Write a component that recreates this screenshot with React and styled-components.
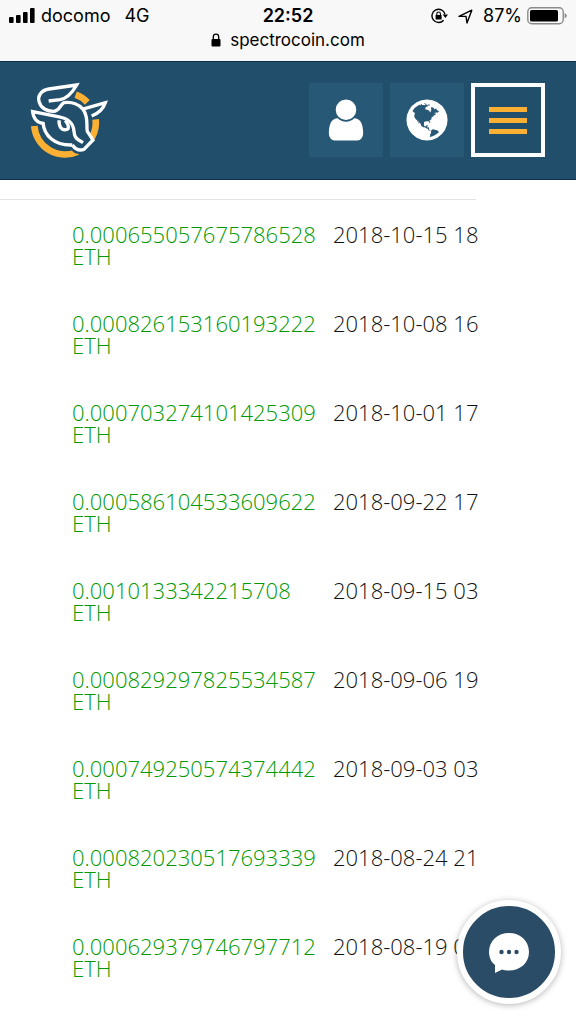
import React from "react";
import styled, { createGlobalStyle } from "styled-components";

const transactions = [
  { amount: "0.000655057675786528", date: "2018-10-15 18" },
  { amount: "0.000826153160193222", date: "2018-10-08 16" },
  { amount: "0.000703274101425309", date: "2018-10-01 17" },
  { amount: "0.000586104533609622", date: "2018-09-22 17" },
  { amount: "0.0010133342215708", date: "2018-09-15 03" },
  { amount: "0.000829297825534587", date: "2018-09-06 19" },
  { amount: "0.000749250574374442", date: "2018-09-03 03" },
  { amount: "0.000820230517693339", date: "2018-08-24 21" },
  { amount: "0.000629379746797712", date: "2018-08-19 0" },
];

export default () => (
  <>
    <GlobalStyle />
    <BrowserBar>
      <StatusRow>
        <StatusGroup>
          <SignalIcon />
          <span>docomo</span>
          <Network>4G</Network>
        </StatusGroup>
        <Clock>22:52</Clock>
        <StatusGroup $end>
          <RotationLockIcon />
          <LocationIcon />
          <Battery>
            <span>87%</span>
            <BatteryIcon />
          </Battery>
        </StatusGroup>
      </StatusRow>
      <Address>
        <LockIcon />
        <span>spectrocoin.com</span>
      </Address>
    </BrowserBar>
    <Header>
      <LogoLink href="/" aria-label="SpectroCoin">
        <Logo />
      </LogoLink>
      <Nav>
        <NavButton type="button" aria-label="Account">
          <UserIcon />
        </NavButton>
        <NavButton type="button" aria-label="Language">
          <GlobeIcon />
        </NavButton>
        <NavButton type="button" aria-label="Menu" $active>
          <MenuIcon />
        </NavButton>
      </Nav>
    </Header>
    <Main>
      <Table>
        <tbody>
          {transactions.map(({ amount, date }) => (
            <tr key={amount}>
              <AmountCell>{`${amount} ETH`}</AmountCell>
              <DateCell>{date}</DateCell>
            </tr>
          ))}
        </tbody>
      </Table>
    </Main>
    <ChatButton type="button" aria-label="Chat">
      <ChatIcon />
    </ChatButton>
  </>
);

const SignalIcon = () => (
  <svg width="26" height="16" viewBox="0 0 26 16">
    <rect x="0" y="9" width="4.6" height="6" rx="1" />
    <rect x="7" y="7" width="4.6" height="8" rx="1" />
    <rect x="14" y="4" width="4.6" height="11" rx="1" />
    <rect x="21" y="0" width="4.6" height="15" rx="1" />
  </svg>
);

const RotationLockIcon = () => (
  <svg width="17" height="16" viewBox="0 0 17 16">
    <path
      d="M14 6.4A6.6 6.6 0 1 0 12.600 12.2"
      fill="none"
      stroke="#000"
      strokeWidth="1.4"
    />
    <path d="M11.600 6.500h5.400L14.400 10z" />
    <rect x="4.6" y="7" width="6" height="4.6" rx="0.6" />
    <path
      d="M5.8 7.2V5.8a1.8 1.8 0 0 1 3.6 0v1.4"
      fill="none"
      stroke="#000"
      strokeWidth="1.1"
    />
  </svg>
);

const LocationIcon = () => (
  <svg width="15" height="15" viewBox="0 0 15 15">
    <path
      d="M1 7.4L13.8 1.2L9 14L8 7.4z"
      fill="none"
      stroke="#000"
      strokeWidth="1.4"
      strokeLinejoin="round"
    />
  </svg>
);

const BatteryIcon = () => (
  <svg width="40" height="18" viewBox="0 0 40 18">
    <rect
      x="0.8"
      y="0.8"
      width="35.4"
      height="16"
      rx="4"
      fill="none"
      stroke="#8a8a8a"
      strokeWidth="1.4"
    />
    <rect x="3" y="3" width="28" height="11.6" rx="1.6" />
    <path d="M37.6 6q2.2 1 2.2 2.8T37.6 11.6z" fill="#8a8a8a" />
  </svg>
);

const LockIcon = () => (
  <svg width="10" height="14" viewBox="0 0 10 14">
    <rect x="0.5" y="6" width="9" height="7.4" rx="1" />
    <path
      d="M2.3 6.5V3.8a2.7 2.7 0 0 1 5.4 0v2.7"
      fill="none"
      stroke="#000"
      strokeWidth="1.3"
    />
  </svg>
);

const Logo = () => (
  <svg width="80" height="80" viewBox="60 60 240 240" fill="none">
    <g stroke="#fbb034" strokeWidth="20">
      <path d="M197 104A92 92 0 0 1 232 127" />
      <path d="M257 178A92 92 0 0 1 246 232" />
      <path d="M73 198A92 92 0 0 0 203 275" />
    </g>
    <path
      d="M187 256C196 269 208 274 222 269L250 241"
      stroke="#214f6b"
      strokeWidth="24"
    />
    <g stroke="#fff" strokeWidth="10">
      <path d="M116 123L150 119C174 115 188 96 200 75L117 87C92 91 83 108 87 124C92 145 112 154 130 154C149 154 151 132 162 128C186 124 209 134 219 148C237 173 228 199 232 214L249 240L222 268C208 273 196 268 187 255" />
      <path d="M216 148L286 128C280 146 264 160 245 168" />
      <path d="M103 190C83 191 71 177 68 155L144 170C178 176 190 190 192 214C193 231 199 236 206 240L219 248" />
      <path d="M99 187C102 226 132 257 187 255" />
      <path d="M147 181C147 201 154 211 168 209C179 207 177 197 166 181" />
    </g>
  </svg>
);

const UserIcon = () => (
  <svg width="48" height="48" viewBox="0 0 1792 1792" fill="#fff">
    <path d="M1536 1399q0 109-62.5 187t-150.5 78h-854q-88 0-150.5-78t-62.5-187q0-85 8.5-160.5t31.5-152 58.5-131 94-89 134.5-34.5q131 128 313 128t313-128q76 0 134.5 34.5t94 89 58.5 131 31.5 152 8.5 160.5zm-256-887q0 159-112.5 271.5t-271.5 112.5-271.5-112.5-112.5-271.5 112.5-271.5 271.5-112.5 271.5 112.5 112.5 271.5z" />
  </svg>
);

const GlobeIcon = () => (
  <svg width="48" height="48" viewBox="0 0 1792 1792" fill="#fff">
    <path d="M896 128q209 0 385.5 103t279.5 279.5 103 385.5-103 385.5-279.5 279.5-385.5 103-385.5-103-279.5-279.5-103-385.5 103-385.5 279.5-279.5 385.5-103zm274 521q-2 1-9.5 9.5t-13.5 9.5q2 0 4.5-5t5-11 3.5-7q6-7 22-15 14-6 52-12 34-8 51 11-2-2 9.5-13t14.5-12q3-2 15-4.5t15-7.5l2-22q-12 1-17.5-7t-6.5-21q0 2-6 8 0-7-4.5-8t-11.5 1-9 1q-10-3-15-7.5t-8-16.5-4-15q-2-5-9.5-11t-9.5-10q-1-2-2.5-5.5t-3-6.5-4-5.5-5.5-2.5-7 5-7.5 10-4.5 5q-3-2-6-1.5t-4.5 1-4.5 3-5 3.5q-3 2-8.5 3t-8.5 2q15-5-1-11-10-4-16-3 9-4 7.5-12t-8.5-14h5q-1-4-8.5-8.5t-17.5-8.5-13-6q-8-5-34-9.5t-33-.5q-5 6-4.5 10.5t4 14 3.5 12.5q1 6-5.5 13t-6.5 12q0 7 14 15.5t10 21.5q-3 8-16 16t-16 12q-5 8-1.5 18.5t10.5 16.5q2 2 1.5 4t-3.5 4.5-5.5 4-6.5 3.5l-3 2q-11 5-20.5-6t-13.5-26q-7-25-16-30-23-8-29 1-5-13-41-26-25-9-58-4 6-1 0-15-7-15-19-12 3-6 4-17.5t1-13.5q3-13 12-23 1-1 7-8.5t9.5-13.5.5-6q35 4 50-11 5-5 11.5-17t10.5-17q9-6 14-5.5t14.5 5.5 14.5 5q14 1 15.5-11t-7.5-20q12 1 3-17-4-7-8-9-12-4-27 5-8 4 2 8-1-1-9.5 10.5t-16.5 17.5-16-5q-1-1-5.5-13.5t-9.5-13.5q-8 0-16 15 3-8-11-15t-24-8q19-12-8-27-7-4-20.5-5t-19.5 4q-5 7-5.5 11.5t5 8 10.5 5.5 11.5 4 8.5 3q14 10 8 14-2 1-8.5 3.5t-11.5 4.5-6 4q-3 4 0 14t-2 14q-5-5-9-17.5t-7-16.5q7 9-25 6l-10-1q-4 0-16 2t-20.5 1-13.5-8q-4-8 0-20 1-4 4-2-4-3-11-9.5t-10-8.5q-46 15-94 41 6 1 12-1 5-2 13-6.5t10-5.5q34-14 42-7l5-5q14 16 20 25-7-4-30-1-20 6-22 12 7 12 5 18-4-3-11.5-10t-14.5-11-15-5q-16 0-22 1-146 80-235 222 7 7 12 8 4 1 5 9t2.5 11 11.5-3q9 8 3 19 1-1 44 27 19 17 21 21 3 11-10 18-1-2-9-9t-9-4q-3 5 .5 18.5t10.5 12.5q-7 0-9.5 16t-2.5 35.5-1 23.5l2 1q-3 12 5.5 34.5t21.5 19.5q-13 3 20 43 6 8 8 9 3 2 12 7.5t15 10 10 10.5q4 5 10 22.5t14 23.5q-2 6 9.5 20t10.5 23q-1 0-2.5 1t-2.5 1q3 7 15.5 14t15.5 13q1 3 2 10t3 11 8 2q2-20-24-62-15-25-17-29-3-5-5.5-15.5t-4.5-14.5q2 0 6 1.5t8.5 3.5 7.5 4 2 3q-3 7 2 17.5t12 18.5 17 19 12 13q6 6 14 19.5t0 13.5q9 0 20 10t17 20q5 8 8 26t5 24q2 7 8.5 13.5t12.5 9.5l16 8 13 7q5 2 18.5 10.5t21.5 11.5q10 4 16 4t14.5-2.5 13.5-3.5q15-2 29 15t21 21q36 19 55 11-2 1 .5 7.5t8 15.5 9 14.5 5.5 8.5q5 6 18 15t18 15q6-4 7-9-3 8 7 20t18 10q14-3 14-32-31 15-49-18 0-1-2.5-5.5t-4-8.5-2.5-8.5 0-7.5 5-3q9 0 10-3.5t-2-12.5-4-13q-1-8-11-20t-12-15q-5 9-16 8t-16-9q0 1-1.5 5.5t-1.5 6.5q-13 0-15-1 1-3 2.5-17.5t3.5-22.5q1-4 5.5-12t7.5-14.5 4-12.5-4.5-9.5-17.5-2.5q-19 1-26 20-1 3-3 10.5t-5 11.5-9 7q-7 3-24 2t-24-5q-13-8-22.5-29t-9.5-37q0-10 2.5-26.5t3-25-5.5-24.5q3-2 9-9.5t10-10.5q2-1 4.5-1.5t4.5 0 4-1.5 3-6q-1-1-4-3-3-3-4-3 7 3 28.5-1.5t27.5 1.5q15 11 22-2 0-1-2.5-9.5t-.5-13.5q5 27 29 9 3 3 15.5 5t17.5 5q3 2 7 5.5t5.5 4.5 5-.5 8.5-6.5q10 14 12 24 11 40 19 44 7 3 11 2t4.5-9.5 0-14-1.5-12.5l-1-8v-18l-1-8q-15-3-18.5-12t1.5-18.5 15-18.5q1-1 8-3.5t15.5-6.5 12.5-8q21-19 15-35 7 0 11-9-1 0-5-3t-7.5-5-4.5-2q9-5 2-16 5-3 7.5-11t7.5-10q9 12 21 2 8-8 1-16 5-7 20.5-10.5t18.5-9.5q7 2 8-2t1-12 3-12q4-5 15-9t13-5l17-11q3-4 0-4 18 2 31-11 10-11-6-20 3-6-3-9.5t-15-5.5q3-1 11.5-.5t10.5-1.5q15-10-7-16-17-5-43 12zm-163 877q206-36 351-189-3-3-12.5-4.5t-12.5-3.5q-18-7-24-8 1-7-2.5-13t-8-9-12.5-8-11-7q-2-2-7-6t-7-5.5-7.5-4.5-8.5-2-10 1l-3 1q-3 1-5.5 2.5t-5.5 3-4 3 0 2.5q-21-17-36-22-5-1-11-5.5t-10.5-7-10-1.5-11.5 7q-5 5-6 15t-2 13q-7-5 0-17.5t2-18.5q-3-6-10.5-4.5t-12 4.5-11.5 8.5-9 6.5-8.5 5.5-8.5 7.5q-3 4-6 12t-5 11q-2-4-11.5-6.5t-9.5-5.5q2 10 4 35t5 38q7 31-12 48-27 25-29 40-4 22 12 26 0 7-8 20.5t-7 21.5q0 6 2 16z" />
  </svg>
);

const MenuIcon = () => (
  <svg width="38" height="27" viewBox="0 0 38 27" fill="#fbb034">
    <rect y="0" width="38" height="5" />
    <rect y="11" width="38" height="5" />
    <rect y="22" width="38" height="5" />
  </svg>
);

const ChatIcon = () => (
  <svg width="42" height="42" viewBox="0 0 42 42">
    <path
      d="M21 2C32 2 41 9.5 41 21C41 32 32 39.5 21 39.5C18 39.5 16 39 14 38.4L7 42V34C3 31 1 26 1 21C1 9.5 10 2 21 2z"
      fill="#fff"
    />
    <g fill="#2b4c66">
      <circle cx="13.5" cy="21" r="2.2" />
      <circle cx="21" cy="21" r="2.2" />
      <circle cx="28.5" cy="21" r="2.2" />
    </g>
  </svg>
);

const GlobalStyle = createGlobalStyle`
  * {
    box-sizing: border-box;
  }

  body {
    margin: 0;
    background-color: #fff;
    font-family: "Open Sans", sans-serif;
  }

  svg {
    display: block;
    flex-shrink: 0;
  }
`;

const BrowserBar = styled.div`
  height: 61px;
  padding: 4px 9px 0;
  background-color: #f8f8f8;
  color: #000;
  font-family: Inter, sans-serif;
  font-size: 18px;
  line-height: 24px;
`;

const StatusRow = styled.div`
  display: grid;
  grid-template-columns: 1fr auto 1fr;
  align-items: center;
`;

const StatusGroup = styled.div`
  display: flex;
  align-items: center;
  justify-content: ${(props) => (props.$end ? "flex-end" : "flex-start")};
  gap: ${(props) => (props.$end ? "10px" : "6px")};
`;

const Network = styled.span`
  margin-left: 8px;
`;

const Clock = styled.span`
  font-weight: 600;
`;

const Battery = styled.div`
  display: flex;
  align-items: center;
  gap: 5px;
`;

const Address = styled.div`
  display: flex;
  align-items: center;
  justify-content: center;
  gap: 9px;
  font-size: 17px;
`;

const Header = styled.header`
  height: 119px;
  padding: 0 31px 1px 30px;
  display: flex;
  justify-content: space-between;
  align-items: center;
  background-color: #214f6b;
  border-top: 1px solid #0c2f50;
  border-bottom: 1px solid #0c2f50;
`;

const LogoLink = styled.a`
  display: block;
`;

const Nav = styled.nav`
  display: flex;
  gap: 7px;
`;

const NavButton = styled.button`
  width: 74px;
  height: 74px;
  padding: 0;
  display: flex;
  justify-content: center;
  align-items: center;
  border: ${(props) => (props.$active ? "4px solid #fff" : "none")};
  background-color: ${(props) => (props.$active ? "transparent" : "#275875")};
`;

const Main = styled.main`
  padding: 19px 100px 0 0;
`;

const Table = styled.table`
  width: 100%;
  table-layout: fixed;
  border-collapse: collapse;
  border-top: 1px solid #e3e3e3;
  font-size: 22px;
  font-weight: 350;
  line-height: 22px;
`;

const Cell = styled.td`
  height: 89px;
  padding: 23px 0 22px;
  vertical-align: top;
`;

const AmountCell = styled(Cell)`
  padding-left: 72px;
  padding-right: 22px;
  color: #009900;
`;

const DateCell = styled(Cell)`
  width: 143px;
  color: #111;
  white-space: nowrap;
`;

const ChatButton = styled.button`
  position: fixed;
  right: 15px;
  bottom: 20px;
  width: 104px;
  height: 104px;
  padding: 0;
  display: flex;
  justify-content: center;
  align-items: center;
  border: 6px solid #fff;
  border-radius: 50%;
  background-color: #2b4c66;
  box-shadow: 0 1px 6px rgba(0, 0, 0, 0.3);
`;
